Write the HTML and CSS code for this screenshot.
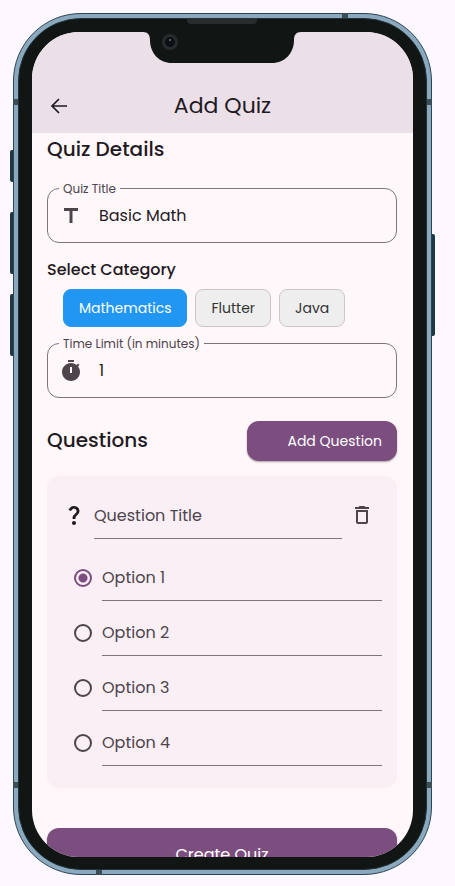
FILE: index.html
```html
<!DOCTYPE html>
<html lang="en">
<head>
<meta charset="utf-8">
<meta name="viewport" content="width=device-width, initial-scale=1">
<title>Add Quiz</title>
<link rel="stylesheet" href="styles.css">
</head>
<body>
<div class="phone">
  <span class="key key-mute"></span>
  <span class="key key-up"></span>
  <span class="key key-down"></span>
  <span class="key key-power"></span>
  <span class="band band-left-top"></span>
  <span class="band band-right-top"></span>
  <span class="band band-left-bottom"></span>
  <span class="band band-right-bottom"></span>
  <span class="band band-top"></span>
  <span class="band band-bottom"></span>
  <div class="bezel">
    <span class="speaker"></span>
    <svg class="notch" width="158" height="32" viewBox="0 0 158 32" aria-hidden="true">
      <path d="M0 0H158V1C153 1 151 4 151 9C151 22 142 32 129 32H29C16 32 7 22 7 9C7 4 5 1 0 1Z" fill="#111615"/>
      <circle cx="27" cy="11" r="6.5" fill="#0d1012" stroke="#282b2d" stroke-width="3"/>
      <circle cx="27" cy="9" r="1" fill="#72777a"/>
    </svg>
    <div class="screen">
      <header class="appbar">
        <button class="icon-button back" type="button" aria-label="Back">
          <svg width="24" height="24" viewBox="0 0 24 24" fill="none" stroke="currentColor" stroke-width="1.7" aria-hidden="true"><path d="M20 12H5M12 5l-7 7 7 7"/></svg>
        </button>
        <h1>Add Quiz</h1>
      </header>
      <main class="content">
        <h2>Quiz Details</h2>
        <div class="field">
          <label for="quiz-title">Quiz Title</label>
          <svg width="24" height="24" viewBox="0 0 24 24" fill="currentColor" aria-hidden="true"><path d="M5 4v3h5.500v12h3V7H19V4z"/></svg>
          <input id="quiz-title" type="text" value="Basic Math">
        </div>
        <h3>Select Category</h3>
        <div class="chips">
          <button class="chip selected" type="button" aria-pressed="true">Mathematics</button>
          <button class="chip" type="button" aria-pressed="false">Flutter</button>
          <button class="chip" type="button" aria-pressed="false">Java</button>
        </div>
        <div class="field">
          <label for="time-limit">Time Limit (in minutes)</label>
          <svg width="24" height="24" viewBox="0 0 24 24" fill="currentColor" aria-hidden="true"><path d="M9 1h6v2H9zM19.030 7.390l1.420-1.420c-.43-.51-.9-.99-1.410-1.410l-1.420 1.420C16.070 4.740 14.120 4 12 4c-4.970 0-9 4.030-9 9s4.020 9 9 9 9-4.030 9-9c0-2.120-.74-4.070-1.970-5.610zM13 14h-2V8h2v6z"/></svg>
          <input id="time-limit" type="text" inputmode="numeric" value="1">
        </div>
        <div class="section-head">
          <h2>Questions</h2>
          <button class="filled add" type="button">Add Question</button>
        </div>
        <section class="card">
          <div class="question">
            <svg class="mark" width="24" height="24" viewBox="0 0 24 24" fill="currentColor" aria-hidden="true"><path d="M11.070 12.850c.77-1.390 2.250-2.210 3.110-3.440.91-1.290.4-3.700-2.180-3.700-1.690 0-2.520 1.280-2.870 2.340L6.540 6.960C7.250 4.830 9.180 3 11.990 3c2.350 0 3.960 1.070 4.780 2.410.7 1.150 1.110 3.300.03 4.900-1.200 1.770-2.350 2.310-2.970 3.450-.25.46-.35.76-.35 2.240h-2.890c-.01-.78-.13-2.050.48-3.150zM14 20c0 1.100-.9 2-2 2s-2-.9-2-2 .9-2 2-2 2 .9 2 2z"/></svg>
            <input class="line" type="text" placeholder="Question Title" aria-label="Question Title">
            <button class="icon-button" type="button" aria-label="Delete question">
              <svg width="24" height="24" viewBox="0 0 24 24" fill="currentColor" aria-hidden="true"><path d="M16 9v10H8V9h8m-1.500-6h-5l-1 1H5v2h14V4h-3.500l-1-1zM18 7H6v12c0 1.100.9 2 2 2h8c1.100 0 2-.9 2-2V7z"/></svg>
            </button>
          </div>
          <div class="option">
            <input type="radio" name="answer" aria-label="Option 1 is correct" checked>
            <input class="line" type="text" placeholder="Option 1" aria-label="Option 1">
          </div>
          <div class="option">
            <input type="radio" name="answer" aria-label="Option 2 is correct">
            <input class="line" type="text" placeholder="Option 2" aria-label="Option 2">
          </div>
          <div class="option">
            <input type="radio" name="answer" aria-label="Option 3 is correct">
            <input class="line" type="text" placeholder="Option 3" aria-label="Option 3">
          </div>
          <div class="option">
            <input type="radio" name="answer" aria-label="Option 4 is correct">
            <input class="line" type="text" placeholder="Option 4" aria-label="Option 4">
          </div>
        </section>
        <button class="filled create" type="button">Create Quiz</button>
      </main>
    </div>
  </div>
</div>
</body>
</html>
```
FILE: styles.css
```css
* { box-sizing: border-box; }

body {
  margin: 0;
  padding: 13px 23px 11px 13px;
  height: 100vh;
  background: #fdf7ff;
  color: #1f1a1f;
  font-family: Poppins, Inter, sans-serif;
}

button, input { font: inherit; color: inherit; }
h1, h2, h3 { margin: 0; }

/* Device frame */
.phone {
  position: relative;
  height: 100%;
  padding: 4px;
  border: 1px solid #2c4552;
  border-radius: 68px;
  background: #8aa9bf;
}

.bezel {
  position: relative;
  height: 100%;
  padding: 13px 13px 12px;
  border: 1px solid #22323a;
  border-radius: 63px;
  background: #111615;
}

.screen {
  height: 100%;
  overflow: hidden;
  border-radius: 47px;
  background: #fff7fa;
}

.notch {
  position: absolute;
  top: 12px;
  left: 50%;
  margin-left: -80px;
}

.speaker {
  position: absolute;
  top: 0;
  left: 50%;
  width: 70px;
  height: 5px;
  margin-left: -36px;
  border-radius: 0 0 4px 4px;
  background: #282c2d;
}

.key {
  position: absolute;
  left: -4px;
  width: 3px;
  border-radius: 2px 0 0 2px;
  background: #203844;
}
.key-mute { top: 136px; height: 32px; }
.key-up { top: 198px; height: 62px; }
.key-down { top: 280px; height: 62px; }
.key-power {
  top: 220px;
  right: -4px;
  left: auto;
  height: 102px;
  border-radius: 0 2px 2px 0;
}

.band { position: absolute; width: 5px; height: 6px; background: #3b4e57; }
.band-left-top { top: 85px; left: -1px; }
.band-right-top { top: 85px; right: -1px; }
.band-left-bottom { bottom: 86px; left: -1px; }
.band-right-bottom { bottom: 86px; right: -1px; }
.band-top { top: -1px; right: 83px; width: 6px; height: 5px; }
.band-bottom { bottom: -1px; left: 82px; width: 6px; height: 5px; }

/* App bar */
.appbar {
  display: grid;
  grid-template-columns: 54px 1fr 54px;
  align-items: center;
  height: 101px;
  padding-top: 46px;
  background: #ebdfe8;
}
.appbar h1 {
  font-size: 22px;
  font-weight: 400;
  line-height: 32px;
  text-align: center;
}

.icon-button {
  display: grid;
  place-items: center;
  width: 40px;
  height: 40px;
  padding: 0;
  border: 0;
  background: none;
  color: #4d444c;
}
.back { justify-self: center; color: #1f1a1f; }

/* Form */
.content {
  display: flex;
  flex-direction: column;
  padding: 0 16px;
  padding-left: 15px;
}

h2 { font-size: 20px; font-weight: 500; line-height: 32px; }
h3 { margin-top: 15px; font-size: 16px; font-weight: 500; line-height: 24px; }

.field {
  position: relative;
  display: flex;
  align-items: center;
  gap: 16px;
  height: 55px;
  margin-top: 16px;
  padding: 0 11px;
  border: 1px solid #7f747c;
  border-radius: 12px;
  color: #4d444c;
}
h2 + .field { margin-top: 23px; }
.field label {
  position: absolute;
  top: -8px;
  left: 11px;
  padding: 0 4px;
  background: #fff7fa;
  font-size: 12px;
  line-height: 16px;
}
.field input {
  flex: 1;
  min-width: 0;
  padding: 0;
  border: 0;
  outline: 0;
  background: none;
  color: #1f1a1f;
  font-size: 16px;
}

.chips {
  display: flex;
  flex-wrap: wrap;
  gap: 8px;
  margin-top: 7px;
  padding-left: 16px;
}
.chip {
  height: 38px;
  padding: 0 15px;
  border: 1px solid #d0c4cc;
  border-radius: 8px;
  background: #eee;
  color: #333;
  font-size: 14px;
}
.chip.selected {
  border-color: #2196f3;
  background: #2196f3;
  color: #fff;
}

.section-head {
  display: flex;
  align-items: center;
  justify-content: space-between;
  margin-top: 23px;
}
.section-head h2 { line-height: 30px; padding-bottom: 2px; }

.filled {
  border: 0;
  border-radius: 12px;
  background: #7b4e7f;
  color: #fff;
  box-shadow: 0 1px 2px rgba(0, 0, 0, 0.35);
}
.add {
  width: 150px;
  height: 40px;
  padding: 0 15px;
  font-size: 14px;
  text-align: right;
}
.create { height: 52px; margin-top: 40px; font-size: 16px; }

.card {
  margin-top: 15px;
  padding: 15px 15px 22px;
  border-radius: 12px;
  background: #f9eff5;
}
.question {
  display: flex;
  align-items: center;
  height: 48px;
  margin-bottom: 7px;
}
.mark { flex: none; margin-right: 8px; }
.question .icon-button { color: #4d444c; }

.line {
  flex: 1;
  min-width: 0;
  height: 100%;
  padding: 2px 0 0;
  border: 0;
  border-bottom: 1px solid #7f747c;
  border-radius: 0;
  outline: 0;
  background: none;
  font-size: 16px;
}
.line::placeholder { color: #4d444c; opacity: 1; }

.option { display: flex; align-items: center; height: 55px; padding-left: 12px; }
.option .line { padding-top: 8px; }
.option input[type="radio"] {
  appearance: none;
  flex: none;
  width: 18px;
  height: 18px;
  margin: 8px 10px 0 0;
  border: 2px solid #4d444c;
  border-radius: 50%;
}
.option input[type="radio"]:checked {
  border-color: #7b4e7f;
  background: radial-gradient(circle, #7b4e7f 4px, transparent 5px);
}
```
